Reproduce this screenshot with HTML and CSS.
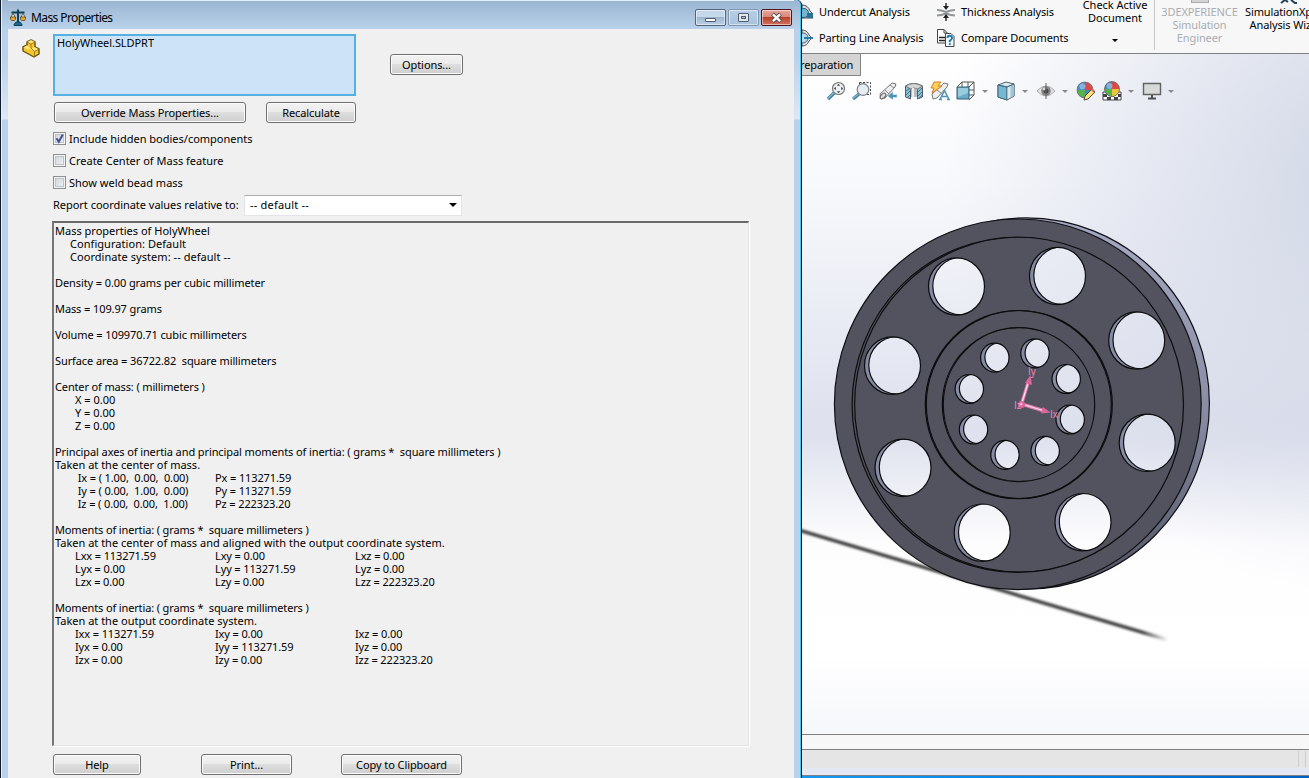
FILE: index.html
```
<!DOCTYPE html>
<html lang="en">
<head>
<meta charset="utf-8">
<title>Mass Properties</title>
<link rel="stylesheet" href="styles.css">
</head>
<body>
<div class="desktop">
  <section class="dialog">
    <header class="titlebar">
      <svg class="title-icon" width="16" height="17" viewBox="0 0 16 17">
        <path d="M1.500 3.500h13M8 .5v13" stroke="#123f57" stroke-width="2" fill="none"/>
        <path d="M6 13h4l2 2.500v1H4v-1z" fill="#1c6a8d" stroke="#123f57"/>
        <path d="M3 4L.8 9h4.600zM13 4l-2.200 5h4.600z" fill="#f6e9bd" stroke="#3d4a50" stroke-width=".8"/>
        <path d="M.5 8h5v2l-1 1.500h-3L.5 10zM10.500 8h5v2l-1 1.500h-3l-1-1.500z" fill="#eea72b" stroke="#5a471c" stroke-width=".8"/>
      </svg>
      <h1 class="title">Mass Properties</h1>
      <div class="window-buttons">
        <span class="wbtn"><svg width="29" height="15"><rect x="9.500" y="8.500" width="10" height="3" rx=".5" fill="#fff" stroke="#4d586b"/></svg></span>
        <span class="wbtn dim"><svg width="29" height="15"><rect x="9.500" y="3.500" width="10" height="8" rx=".5" fill="#e1e7ee" stroke="#525d70"/><rect x="12.500" y="6.500" width="4" height="2" fill="#a8bed7" stroke="#525d70"/></svg></span>
        <span class="wbtn close"><svg width="29" height="15"><path d="M10.500 4l8 7.500M18.500 4l-8 7.500" stroke="#524956" stroke-width="4.200"/><path d="M10.900 4.400l7.200 6.700M18.100 4.400l-7.200 6.700" stroke="#fff" stroke-width="2.400"/></svg></span>
      </div>
    </header>
    <div class="body">
      <div class="row pick">
        <svg class="part-icon" width="19" height="20" viewBox="0 0 19 20">
          <path d="M1 8l4-2V3l4-2 4 2v5l4 2v5l-5 3L1 12z" fill="#f5c52d" stroke="#66500f" stroke-width="1.400" stroke-linejoin="round"/>
          <path d="M5 3l4 2 4-2-4-2zM1.500 8.300L5 6.300l3.500 3-2 1.500zM8.500 10l4-2 4 2-4 2.400z" fill="#ffe57a"/>
          <path d="M5 3l4 2.200V9l3.500 3.500V18M9 5.200L13 3M12.500 12.500l4.500-2.300" fill="none" stroke="#8d6c12" stroke-width=".8"/>
        </svg>
        <div class="selection">HolyWheel.SLDPRT</div>
        <button class="btn options">Options...</button>
      </div>
      <div class="row actions">
        <button class="btn override">Override Mass Properties...</button>
        <button class="btn recalc">Recalculate</button>
      </div>
      <div class="checks">
        <label class="check"><span class="box"><svg width="11" height="11"><path d="M2.500 5.200l2.300 3.500L8.800 1.500" fill="none" stroke="#3e4f92" stroke-width="2"/></svg></span><span>Include hidden bodies/components</span></label>
        <label class="check"><span class="box"></span><span>Create Center of Mass feature</span></label>
        <label class="check"><span class="box"></span><span>Show weld bead mass</span></label>
      </div>
      <div class="row relative-to">
        <span class="relative-label">Report coordinate values relative to:</span>
        <div class="combo"><span class="combo-value">-- default --</span><i class="caret"></i></div>
      </div>
      <div class="report">
        <p>Mass properties of HolyWheel</p>
        <p class="in1 loose">Configuration: Default</p>
        <p class="in1 loose">Coordinate system: -- default --</p>
        <p class="gap">Density = 0.00 grams per cubic millimeter</p>
        <p class="gap">Mass = 109.97 grams</p>
        <p class="gap">Volume = 109970.71 cubic millimeters</p>
        <p class="gap">Surface area = 36722.82  square millimeters</p>
        <p class="gap units">Center of mass: ( millimeters )</p>
        <p class="in2">X = 0.00</p>
        <p class="in2">Y = 0.00</p>
        <p class="in2">Z = 0.00</p>
        <p class="gap">Principal axes of inertia and principal moments of inertia: ( grams *  square millimeters )</p>
        <p>Taken at the center of mass.</p>
        <div class="cols">
          <span> Ix = ( 1.00,  0.00,  0.00)</span><span>Px = 113271.59</span><span></span>
          <span> Iy = ( 0.00,  1.00,  0.00)</span><span>Py = 113271.59</span><span></span>
          <span> Iz = ( 0.00,  0.00,  1.00)</span><span>Pz = 222323.20</span><span></span>
        </div>
        <p class="gap units">Moments of inertia: ( grams *  square millimeters )</p>
        <p>Taken at the center of mass and aligned with the output coordinate system.</p>
        <div class="cols">
          <span>Lxx = 113271.59</span><span>Lxy = 0.00</span><span>Lxz = 0.00</span>
          <span>Lyx = 0.00</span><span>Lyy = 113271.59</span><span>Lyz = 0.00</span>
          <span>Lzx = 0.00</span><span>Lzy = 0.00</span><span>Lzz = 222323.20</span>
        </div>
        <p class="gap units">Moments of inertia: ( grams *  square millimeters )</p>
        <p>Taken at the output coordinate system.</p>
        <div class="cols">
          <span>Ixx = 113271.59</span><span>Ixy = 0.00</span><span>Ixz = 0.00</span>
          <span>Iyx = 0.00</span><span>Iyy = 113271.59</span><span>Iyz = 0.00</span>
          <span>Izx = 0.00</span><span>Izy = 0.00</span><span>Izz = 222323.20</span>
        </div>
      </div>
      <div class="row footer">
        <button class="btn help">Help</button>
        <button class="btn print">Print...</button>
        <button class="btn copy">Copy to Clipboard</button>
      </div>
    </div>
  </section>

  <main class="app">
    <div class="ribbon">
      <div class="tools first">
        <div class="tool"><svg width="12" height="20" viewBox="0 0 12 20"><path d="M0 3q6 0 8 6l3 3-2 1 2 3H0z" fill="#d9dde0" stroke="#43494d"/><circle cx="2" cy="11" r="4.500" fill="#76b4d2" stroke="#285e7a"/><path d="M5 11h6v5H5z" fill="#28718f"/></svg><span>Undercut Analysis</span></div>
        <div class="tool"><svg width="12" height="20" viewBox="0 0 12 20"><path d="M0 2q5 0 7 5l3 3-3 3q-2 5-7 5z" fill="#e5e7e8" stroke="#4c5154"/><circle cx="1" cy="10" r="5" fill="#b8dbea" stroke="#50616a"/><path d="M2 10h9" stroke="#287ca7" stroke-width="2"/></svg><span>Parting Line Analysis</span></div>
      </div>
      <div class="tools second">
        <div class="tool"><svg width="20" height="20" viewBox="0 0 20 20"><path d="M1 8q4 0 9 2 5-2 9-2M1 13.500q4 0 9-2 5 2 9 2" fill="none" stroke="#929699" stroke-width="2"/><path d="M10 1v6M10 19v-6" stroke="#222" stroke-width="1.400"/><path d="M7 4l3 4 3-4zM7 16l3-4 3 4z" fill="#222"/></svg><span>Thickness Analysis</span></div>
        <div class="tool"><svg width="20" height="20" viewBox="0 0 20 20"><path d="M1.500 1.500H8l3 3V15H1.500z" fill="#fff" stroke="#454545"/><path d="M8 1.500V5h3" fill="none" stroke="#454545"/><path d="M9.500 5.500H15l3 3v10H9.500z" fill="#f4fafd" stroke="#454545"/><path d="M3 9.500h6M3 12.500h6" stroke="#222" stroke-width="1.400"/><path d="M11.500 10q0-2.200 2.200-2.200T16 10q0 1.300-2.200 2.800v1.400M13.800 15.300v1.700" fill="none" stroke="#187ba8" stroke-width="1.900"/></svg><span>Compare Documents</span></div>
      </div>
      <div class="stack active-doc"><span class="line-top">Check Active</span><span>Document</span><i class="caret small"></i></div>
      <div class="stack experience"><i class="cloud"></i><span>3DEXPERIENCE</span><span>Simulation</span><span>Engineer</span></div>
      <div class="stack xpress"><svg class="cut" width="22" height="4"><path d="M3 3l4-3 3 2M13 0l4 3h2" stroke="#1f4158" stroke-width="2" fill="none"/></svg><span>SimulationXpress</span><span>Analysis Wizard</span></div>
    </div>
    <div class="viewport">
      <div class="tab">reparation</div>
      <div class="hud">
        <svg width="20" height="20" viewBox="0 0 20 20"><path d="M2 18l6-6" stroke="#3c7898" stroke-width="3.400"/><path d="M2 17.500l5.500-5.500" stroke="#83bad4" stroke-width="1.400"/><circle cx="12.500" cy="7.500" r="6" fill="#edf1f3" stroke="#777" stroke-width="1.200"/><path d="M12.500 2.800l1.700 2h-3.400zM12.500 12.200l1.700-2h-3.400zM7.800 7.500l2-1.700v3.400zM17.200 7.500l-2-1.700v3.400z" fill="#454545"/></svg>
        <svg width="20" height="20" viewBox="0 0 20 20"><path d="M7.500 1.500h11v12h-4M7.500 1.500V4" fill="none" stroke="#444" stroke-dasharray="2 1.500"/><path d="M1 18l6-5" stroke="#3c7898" stroke-width="3.200"/><path d="M1 17.500l5.500-4.500" stroke="#83bad4" stroke-width="1.300"/><circle cx="11" cy="8.500" r="5.800" fill="#e4eef3" stroke="#808080" stroke-width="1.200"/></svg>
        <svg width="20" height="20" viewBox="0 0 20 20"><path d="M2 13L14 2l4 1-1 3L7 17l-4 1z" fill="#eee" stroke="#777"/><path d="M7 9l4 4M12 4l4 3" stroke="#888"/><ellipse cx="5" cy="15" rx="3.500" ry="2" transform="rotate(-45 5 15)" fill="#ddd" stroke="#666"/><path d="M19 13.500h-4v-3L9.500 15l5.500 4v-2.500h4z" fill="#4b94b7" stroke="#eaf3f7" stroke-width=".5"/></svg>
        <svg width="20" height="20" viewBox="0 0 20 20"><path d="M1.500 5q8-5 17 0v11l-5 2V8q-3.500-1.500-7 0v10l-5-2z" fill="#8cc3db" stroke="#565e63"/><path d="M1.500 5q8-5 17 0l-5 3q-3.500-2-7 0z" fill="#d5d6d7" stroke="#777"/><path d="M7 8q3-1.500 6 0v8H7z" fill="#bbb"/><path d="M9 7v9" stroke="#eee" stroke-width="2"/><path d="M2 10l4-3M2 14l4-4M3 17l3-3M14 11l4-4M14 15l4-4M15 17l3-2.500" stroke="#2f7391"/></svg>
        <svg width="20" height="20" viewBox="0 0 20 20"><path d="M2 13L14 2l4 1-1 3L7 17l-4 1z" fill="#eee" stroke="#777"/><path d="M7 9l5 4" stroke="#888"/><path d="M4 1h7L8 5h4L2 12l2-5H1z" fill="#fad255" stroke="#d97b30"/><path d="M10 18.500l4.500-9 4.500 9M11.500 15.500h6M9 18.500h3M17 18.500h3" fill="none" stroke="#4d94b5" stroke-width="1.500"/></svg>
        <svg width="20" height="20" viewBox="0 0 20 20"><path d="M1 6l5-5h12v13l-5 5M6 1v5M12.500 6.500L18 1M13 14h5M12 1v5M13 9h5" fill="none" stroke="#555"/><path d="M1 6h12v12H1z" fill="#68abca" stroke="#335b70"/><path d="M2 7h10v5L2 16z" fill="#99ccdf"/></svg>
        <i class="drop"></i>
        <svg width="20" height="20" viewBox="0 0 20 20"><path d="M2 4l8-3 8 2v12l-7 4-9-3z" fill="#dceaf0" stroke="#4e6068"/><path d="M2 4l9 2v13l-9-3z" fill="#78b7d1" stroke="#3c6980"/><path d="M11 6l7-3v12l-7 4z" fill="#dde8ed" stroke="#556870" stroke-width=".7"/><path d="M14.500 5l3-1.500v11l-3 2z" fill="#9ac9dc"/><path d="M2 4l9 2 7-3" fill="none" stroke="#456b7c"/></svg>
        <i class="drop"></i>
        <svg width="20" height="20" viewBox="0 0 20 20"><path d="M1 10q9-10 18 0-9 10-18 0z" fill="#e2e2e2" stroke="#aaa"/><circle cx="10" cy="10" r="4.800" fill="#858585"/><circle cx="10" cy="10" r="2.500" fill="#444"/><circle cx="8" cy="8" r="1.400" fill="#ddd"/><path d="M10 2v16" stroke="#666"/></svg>
        <i class="drop"></i>
        <svg width="20" height="20" viewBox="0 0 20 20"><circle cx="9" cy="9" r="8" fill="#da4b43"/><path d="M9 9V1a8 8 0 0 0-8 8z" fill="#4687c5"/><path d="M9 9H1a8 8 0 0 0 8 8z" fill="#55b34b"/><path d="M1 9a8 8 0 0 1 8-8q-3 3-2.500 8z" fill="#4a90cf"/><path d="M9 9v8a8 8 0 0 0 8-8z" fill="#4687c5"/><circle cx="6.500" cy="5.500" r="3" fill="#fff" opacity=".35"/><circle cx="9" cy="9" r="8" fill="none" stroke="#687075" stroke-width=".7"/><path d="M8 19l1-4 7-7 3 3-7 7z" fill="#ffe17c" stroke="#514b3d"/><path d="M15 9l1.500-1.500 2.500 2.500-1.500 1.500z" fill="#ce6d62"/></svg>
        <svg width="20" height="20" viewBox="0 0 20 20"><path d="M1 11h18v8H1z" fill="#fff" stroke="#444"/><path d="M1 13h4v3H1zM5 16h4v3H5zM9 13h3v3H9zM12 16h4v3h-4zM16 13h3v3h-3z" fill="#444"/><circle cx="10" cy="8" r="7.500" fill="#da4b43"/><path d="M10 8V.5A7.500 7.500 0 0 0 2.500 8z" fill="#4687c5"/><path d="M10 8H2.500a7.500 7.500 0 0 0 7.500 7.500z" fill="#55b34b"/><path d="M10 8v7.500A7.500 7.500 0 0 0 17.500 8z" fill="#e9c640"/><circle cx="7.500" cy="5" r="3" fill="#fff" opacity=".35"/><circle cx="10" cy="8" r="7.500" fill="none" stroke="#596269" stroke-width=".7"/></svg>
        <i class="drop"></i>
        <svg width="20" height="20" viewBox="0 0 20 20"><path d="M1.500 2.500h17v11h-17z" fill="#d7d8d8" stroke="#626262" stroke-width="1.400"/><path d="M10 14v3M6 17.500h8" stroke="#505050" stroke-width="2"/></svg>
        <i class="drop"></i>
      </div>
      <svg class="model" width="507" height="680" viewBox="802 54 507 680">
        <defs>
          <path id="holes" d="M928.500 286.500a28 28.700 0 1 0 56 0a28 28.700 0 1 0-56 0zM1029.500 276a28 28.700 0 1 0 56 0a28 28.700 0 1 0-56 0zM1108.700 340.500a28 28.700 0 1 0 56 0a28 28.700 0 1 0-56 0zM1119.200 442.800a28 28.700 0 1 0 56 0a28 28.700 0 1 0-56 0zM1055 522.200a28 28.700 0 1 0 56 0a28 28.700 0 1 0-56 0zM954.200 532.700a28 28.700 0 1 0 56 0a28 28.700 0 1 0-56 0zM875 467.800a28 28.700 0 1 0 56 0a28 28.700 0 1 0-56 0zM864.500 365.700a28 28.700 0 1 0 56 0a28 28.700 0 1 0-56 0z
          M980.600 357.700a14.200 14.500 0 1 0 28.400 0a14.200 14.500 0 1 0-28.400 0zM1020.800 353.300a14.200 14.500 0 1 0 28.400 0a14.200 14.500 0 1 0-28.400 0zM1052 379a14.200 14.500 0 1 0 28.400 0a14.200 14.500 0 1 0-28.400 0zM1056 419.500a14.200 14.500 0 1 0 28.400 0a14.200 14.500 0 1 0-28.400 0zM1031 450.800a14.200 14.500 0 1 0 28.400 0a14.200 14.500 0 1 0-28.400 0zM990.800 454.800a14.200 14.500 0 1 0 28.400 0a14.200 14.500 0 1 0-28.400 0zM959.300 429.500a14.200 14.500 0 1 0 28.400 0a14.200 14.500 0 1 0-28.400 0zM955.100 389a14.200 14.500 0 1 0 28.400 0a14.200 14.500 0 1 0-28.400 0z"/>
          <clipPath id="holeClip"><use href="#holes"/></clipPath>
          <clipPath id="rimClip"><ellipse cx="1017.800" cy="404.700" rx="165.700" ry="167.700"/></clipPath>
          <clipPath id="boreClip"><ellipse cx="1018.500" cy="404.600" rx="76.200" ry="77"/></clipPath>
          <mask id="through" maskUnits="userSpaceOnUse" x="802" y="54" width="507" height="680">
            <rect x="802" y="54" width="507" height="680" fill="#fff"/>
            <g clip-path="url(#holeClip)"><use href="#holes" transform="translate(4.300 -.4)" fill="#000"/></g>
          </mask>
          <linearGradient id="edge" x1="0" y1="0" x2="0" y2="1"><stop offset="0" stop-color="#a3a8c0"/><stop offset=".5" stop-color="#8b8fa6"/><stop offset="1" stop-color="#505263"/></linearGradient>
          <linearGradient id="floorFade" gradientUnits="userSpaceOnUse" x1="802" y1="0" x2="1168" y2="0"><stop offset="0" stop-color="#444"/><stop offset=".93" stop-color="#444"/><stop offset="1" stop-color="#444" stop-opacity="0"/></linearGradient>
          <filter id="soft"><feGaussianBlur stdDeviation=".8"/></filter>
        </defs>
        <path d="M795 529L1170 640.500" stroke="url(#floorFade)" stroke-width="3.600" filter="url(#soft)"/>
        <g mask="url(#through)">
          <ellipse cx="1026" cy="403.500" rx="183.400" ry="185.600" fill="url(#edge)" stroke="#101014" stroke-width="1.200"/>
          <ellipse cx="1017.800" cy="404.300" rx="183.400" ry="185.300" fill="#52535f" stroke="#101014" stroke-width="1.200"/>
          <use href="#holes" fill="#868ba3"/>
        </g>
        <g fill="none" stroke="#0c0c0e" stroke-width="1.200">
          <ellipse cx="1017.800" cy="404.700" rx="165.700" ry="167.700"/>
          <ellipse cx="1020.300" cy="404.500" rx="165.700" ry="167.500" clip-path="url(#rimClip)"/>
          <ellipse cx="1018.300" cy="404.600" rx="93" ry="94.100"/>
          <ellipse cx="1019.300" cy="404.500" rx="93" ry="94"/>
          <ellipse cx="1018.500" cy="404.600" rx="76.200" ry="77"/>
          <ellipse cx="1019.500" cy="404.500" rx="76.200" ry="77" clip-path="url(#boreClip)"/>
          <use href="#holes"/>
          <g clip-path="url(#holeClip)"><use href="#holes" transform="translate(4.300 -.4)"/></g>
        </g>
        <g stroke="#de79aa" stroke-width="3.400" fill="#d9679c"><path d="M1021.500 404L1028 383M1021.500 404L1043 410.500"/><path d="M1021.500 404L1028 383M1021.500 404L1043 410.500" stroke="#ffe3f0" stroke-width="1.200"/>
          <path d="M1030.500 375l1.500 10-7-2zM1050.500 412.500l-9.500 1 2-6.500z" stroke="none"/><circle cx="1021.600" cy="404.500" r="3.500" stroke="none"/><circle cx="1021" cy="404" r="1.300" fill="#ffd8e9" stroke="none"/></g>
        <g class="axis-labels"><text x="1028" y="375">Iy</text><text x="1050" y="418">Ix</text><text x="1014" y="409">Iz</text></g>
      </svg>
    </div>
    <div class="panel-strip"></div>
    <div class="status"><i></i><i></i></div>
    <div class="frame-bottom"></div>
    <div class="taskbar"></div>
  </main>
</div>
</body>
</html>
```

FILE: styles.css
```
* { box-sizing: border-box; }
body { margin: 0; overflow: hidden; font: 11px/13px "Noto Sans", "Open Sans", sans-serif; color: #000; }
.desktop { display: flex; width: 1309px; height: 778px; }
.dialog { width: 802px; height: 778px; flex: none; display: flex; flex-direction: column; padding: 0 7px 0 7px; border-left: 1px solid #101a2a; border-right: 1px solid #000; box-shadow: inset -1px 0 #42c8ee, inset 1px 0 #e8f2fb; background: linear-gradient(#9ab5d1 0, #b9d1ea 29px, #b9d1ea 55px, #dce8f5 119px, #b9d1ea 120px); border-top-right-radius: 5px; }
.titlebar { height: 29px; flex: none; display: flex; align-items: flex-start; border-top: 1px solid #e4eef8; }
.title-icon { margin: 8px 0 0 2px; }
.title { margin: 9px 0 0 5px; font-size: 12px; line-height: 16px; font-weight: 400; letter-spacing: -.6px; }
.window-buttons { display: flex; gap: 2px; margin: 8px 2px 0 auto; }
.wbtn { width: 31px; height: 17px; border: 1px solid #53657b; border-radius: 2px; background: linear-gradient(#c4d7eb 0 48%, #9eb7d1 50%, #b9d0e8); box-shadow: inset 0 0 0 1px #ffffff80; }
.wbtn svg { display: block; }
.dim { border-color: #8197b0; background: linear-gradient(#b8cee6, #a8c3dd); }
.close { border-color: #4d161d; background: linear-gradient(#e7a69a 0, #d98779 48%, #bb4028 50%, #d27460); }
.body { flex: 1; background: #f0f0f0; padding: 5px 0 0 45px; display: flex; flex-direction: column; }
.row { display: flex; flex: none; }
.pick { margin-left: -31px; height: 62px; }
.part-icon { margin: 5px 12px 0 0; }
.selection { width: 303px; height: 62px; border: 2px solid #56b0e2; background: #cde4f8; padding: 0 2px; letter-spacing: -.06px; }
.btn { height: 21px; padding: 0 0 1px; border: 1px solid #707070; border-radius: 3px; font: 11px/17px "Noto Sans", sans-serif; color: #000; white-space: nowrap; letter-spacing: -.08px; background: linear-gradient(#f2f2f2 0, #ebebeb 48%, #dddddd 50%, #cfcfcf); box-shadow: inset 0 0 0 1px #fcfcfc; }
.options { width: 73px; margin: 20px 0 0 34px; }
.actions { margin: 6px 0 0 1px; gap: 20px; }
.override { width: 192px; }
.recalc { width: 90px; }
.checks { display: flex; flex-direction: column; gap: 9px; margin-top: 9px; }
.check { display: flex; gap: 3px; height: 13px; }
.box { width: 13px; height: 13px; border: 1px solid #8e8f8f; background: linear-gradient(135deg, #cdd2d9, #f4f4f4); box-shadow: inset 0 0 0 1px #f4f4f4, inset 0 0 0 2px #bcc3ca; }
.box svg { display: block; }
.relative-to { margin-top: 6px; height: 22px; }
.relative-label { width: 191px; padding-top: 3px; white-space: nowrap; letter-spacing: -.03px; }
.combo { width: 218px; height: 21px; background: #fff; border: 1px solid #e3e3ea; border-top-color: #abadb3; display: flex; justify-content: space-between; align-items: center; padding: 0 4px 1px 5px; }
.combo-value { margin-top: -1px; letter-spacing: .2px; }
.caret { width: 0; border: 4px solid transparent; border-top-color: #000; border-bottom: 0; }
.report { width: 697px; height: 525px; flex: none; margin: 4px 0 0 -1px; border: 2px solid #696969; border-left-color: #777; border-bottom: 1px solid #e3e3e3; border-right: 1px solid #e3e3e3; box-shadow: 1px 1px #fff; padding: 1px 0 0 1px; }
.report p { margin: 0; white-space: pre; }
.report .gap { margin-top: 13px; letter-spacing: -.1px; }
.report .units { letter-spacing: -.14px; }
.report .loose { letter-spacing: .05px; }
.report .in1 { padding-left: 15px; }
.report .in2 { padding-left: 20px; }
.cols { display: grid; grid-template-columns: 140px 140px 140px; padding-left: 20px; white-space: pre; letter-spacing: -.12px; }
.footer { margin-top: 8px; }
.help { width: 88px; }
.print { width: 91px; margin-left: 60px; }
.copy { width: 121px; margin-left: 49px; }

.app { width: 507px; display: flex; flex-direction: column; overflow: hidden; }
.ribbon { height: 54px; flex: none; display: flex; background: #f7f7f7; border-bottom: 1px solid #808080; white-space: nowrap; letter-spacing: -.12px; }
.ribbon > div { flex: none; }
.tools { display: flex; flex-direction: column; gap: 6px; padding-top: 2px; }
.tool { display: flex; height: 20px; align-items: center; gap: 5px; }
.tool span { margin-top: -2px; }
.first { width: 134px; }
.second { width: 145px; }
.stack { display: flex; flex-direction: column; align-items: center; }
.active-doc { width: 72px; margin-left: -2px; letter-spacing: -.02px; }
.line-top { line-height: 9px; margin-bottom: 2px; }
.small { border-width: 3px; border-bottom: 0; margin-top: 15px; }
.experience { width: 90px; margin-left: 3px; border-left: 1px solid #c6c6c6; height: 50px; color: #aaadb2; }
.cloud { width: 18px; height: 3px; background: #d2d4d7; border: 1px solid #aaa; border-top: 0; margin-bottom: 2px; }
.xpress { margin-left: 1px; }
.cut { margin-bottom: 1px; }
.viewport { flex: 1; position: relative; display: flex; flex-direction: column; align-items: flex-start; background: radial-gradient(ellipse 440px 420px at 580px 120px, #cfd5e5 0, #cfd5e500 100%), linear-gradient(#fff 0, #f8f9fc 130px, #dfe2ee 360px, #dfe2ee 385px, #fdfdfe 490px, #fff 600px, #f5f7fa 680px); }
.tab { width: 59px; height: 22px; padding: 4px 0 0; border: 1px solid #858585; border-top: 0; border-left: 0; background: #d4d4d4; text-indent: -2px; overflow: hidden; letter-spacing: -.1px; }
.hud { display: flex; gap: 6px; margin: 5px 0 0 24px; }
.hud svg { flex: none; }
.drop { width: 6px; height: 0; margin: 9px 2px 0 0; border: 3px solid transparent; border-top: 3px solid #898989; border-bottom: 0; }
.model { position: absolute; left: 0; top: 0; }
.axis-labels { font: 10px "Open Sans", sans-serif; fill: #f28abf; }
.panel-strip { height: 15px; background: #f7f7f7; border-top: 1px solid #808080; }
.status { height: 19px; background: #e5e5e5; border-top: 1px solid #808080; display: flex; justify-content: flex-end; gap: 6px; padding: 1px 3px 1px 0; }
.status i { width: 1px; background: #cfcfcf; }
.frame-bottom { height: 8px; background: #e4e8f3; border-bottom: 1px solid #808080; }
.taskbar { height: 2px; background: linear-gradient(90deg, #1598f0, #0087ee 50%, #0060c4); }
```
